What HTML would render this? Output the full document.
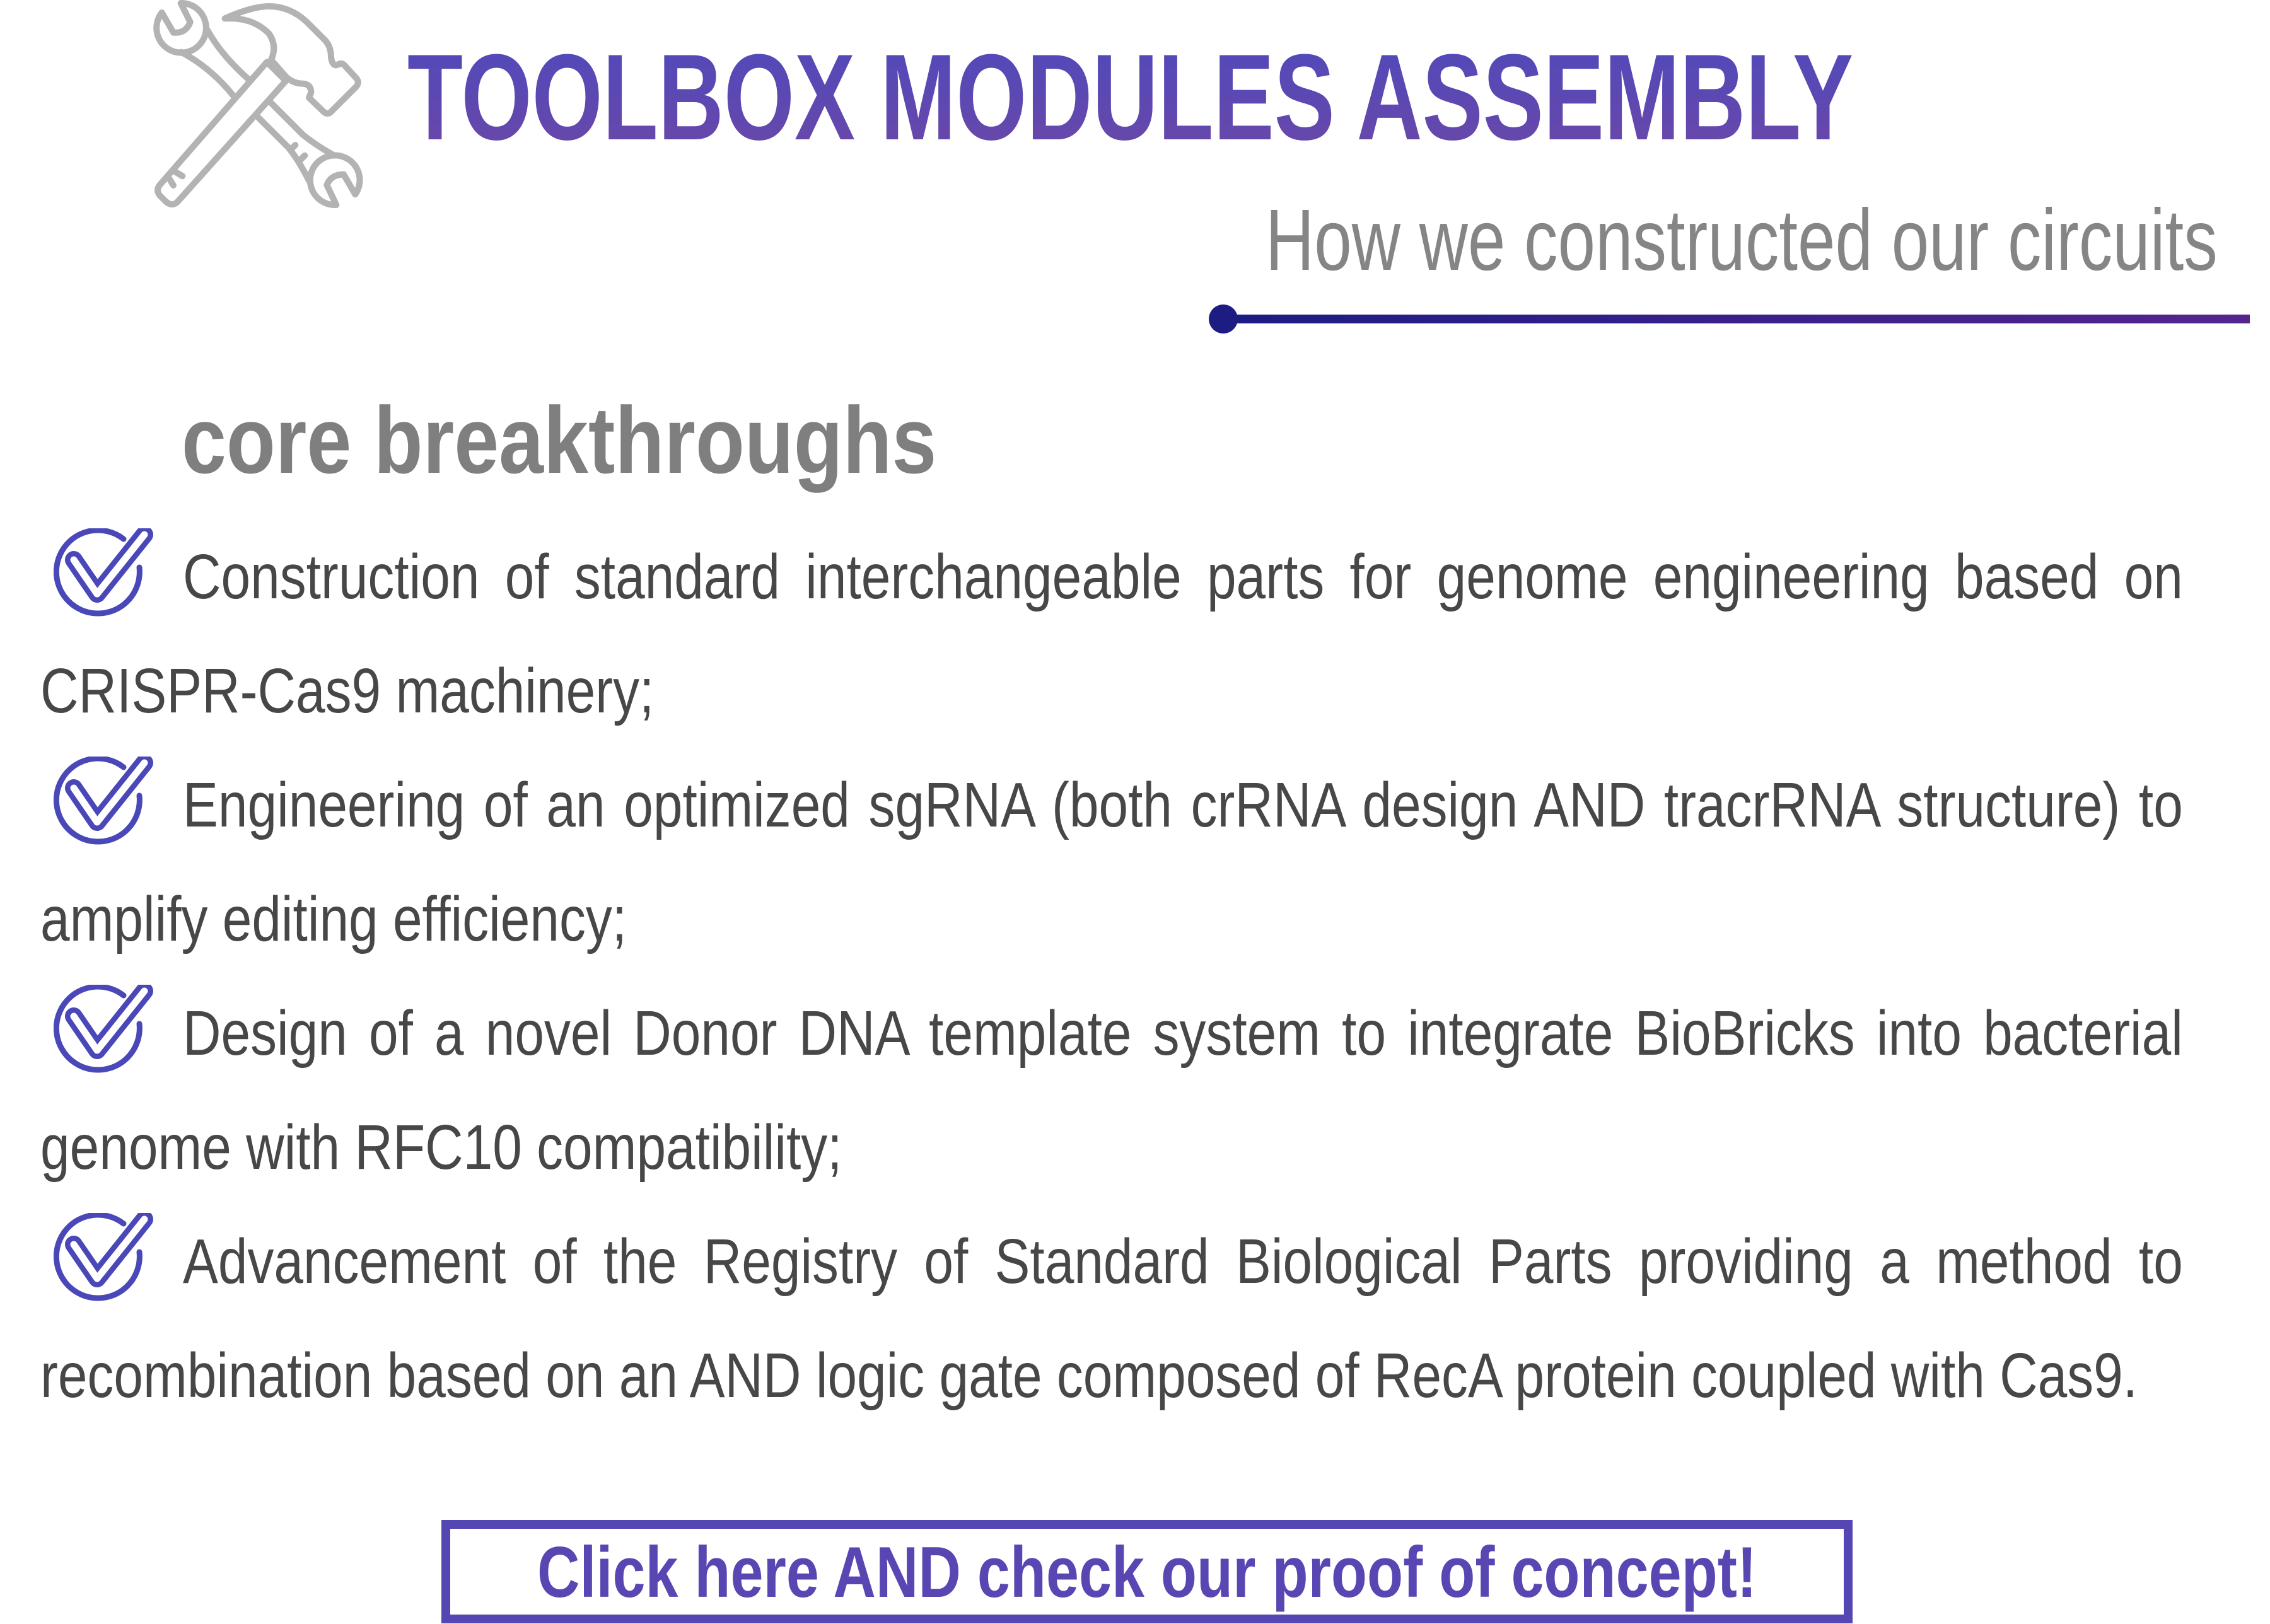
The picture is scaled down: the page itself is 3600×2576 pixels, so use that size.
<!DOCTYPE html>
<html><head><meta charset="utf-8"><style>
html,body{margin:0;padding:0;background:#fff;}
body{width:3600px;height:2576px;position:relative;overflow:hidden;font-family:"Liberation Sans",sans-serif;}
.a{position:absolute;white-space:nowrap;line-height:1;transform-origin:0 0;}
.b{font-size:100px;color:#474747;}
.j{text-align:justify;text-align-last:justify;}
</style></head><body>

<svg style="position:absolute;left:200px;top:0" width="420" height="360" viewBox="0 0 1260 1080" fill="none" stroke="#b3b3b3" stroke-width="30" stroke-linejoin="round" stroke-linecap="round">
<path d="M170,60 L225,155 Q285,160 305,105 L260,15 A118,118 0 1 1 170,60 Z"/>
<path d="M385,140 Q450,260 580,375"/>
<path d="M262,248 Q400,320 510,455"/>
<path d="M690,490 L840,640 Q900,690 990,740"/>
<path d="M630,560 L770,700 Q820,760 870,860"/>
<path d="M1090,925 L1035,830 Q975,830 955,880 L1000,975 A118,118 0 1 1 1090,925 Z"/>
<path d="M805,690 L785,710 M850,740 L830,760"/>
<path d="M670,295 L760,385 L245,960 Q220,985 190,960 L160,930 Q140,905 160,880 Z"/>
<path d="M230,815 L268,838 M205,850 L225,882"/>
<path d="M470,88 Q600,80 680,160 Q720,220 690,285 L765,370 Q800,398 840,398 Q880,400 880,440 L870,465 L940,532 Q958,548 975,532 L1095,412 Q1112,392 1095,372 L1040,312 Q1025,296 1010,306 Q982,322 975,272 Q975,220 945,190 L860,105 Q780,30 680,30 Q600,30 470,88 Z"/>
</svg>

<div class="a" style="left:646px;top:58px;font-size:194px;font-weight:bold;color:#5548b5;transform:scaleX(0.743);background:linear-gradient(180deg,#5049bb,#6a48a8);-webkit-background-clip:text;background-clip:text;-webkit-text-fill-color:transparent;">TOOLBOX MODULES ASSEMBLY</div>

<div class="a" style="left:2007px;top:312px;font-size:138px;color:#858585;transform:scaleX(0.775);">How we constructed our circuits</div>

<div style="position:absolute;left:1940px;top:499px;width:1628px;height:14px;background:linear-gradient(90deg,#1c1c82,#55248f);"></div>
<div style="position:absolute;left:1917px;top:483px;width:46px;height:46px;border-radius:50%;background:#1c1c82;"></div>

<div class="a" style="left:288px;top:623px;font-size:150px;font-weight:bold;color:#7f7f7f;transform:scaleX(0.85);">core breakthroughs</div>

<svg width="0" height="0" style="position:absolute"><defs>
<g id="ck">
<path d="M111,17 A66,66 0 1 0 136,62" fill="none" stroke="#4a48b8" stroke-width="9" stroke-linecap="round"/>
<path d="M32,50 L69,104 L144,10" fill="none" stroke="#4a48b8" stroke-width="28" stroke-linecap="round" stroke-linejoin="round"/>
<path d="M32,50 L69,104 L144,10" fill="none" stroke="#fff" stroke-width="11" stroke-linecap="round" stroke-linejoin="round"/>
</g></defs></svg>
<svg style="position:absolute;left:85px;top:838px" width="160" height="145" viewBox="0 0 160 145"><use href="#ck"/></svg>
<svg style="position:absolute;left:85px;top:1200px" width="160" height="145" viewBox="0 0 160 145"><use href="#ck"/></svg>
<svg style="position:absolute;left:85px;top:1562px" width="160" height="145" viewBox="0 0 160 145"><use href="#ck"/></svg>
<svg style="position:absolute;left:85px;top:1924px" width="160" height="145" viewBox="0 0 160 145"><use href="#ck"/></svg>

<div class="a b j" style="left:290px;top:865px;width:3785px;transform:scaleX(0.838);">Construction of standard interchangeable parts for genome engineering based on</div>
<div class="a b" style="left:64px;top:1046px;transform:scaleX(0.838);">CRISPR-Cas9 machinery;</div>
<div class="a b j" style="left:290px;top:1227px;width:3785px;transform:scaleX(0.838);">Engineering of an optimized sgRNA (both crRNA design AND tracrRNA structure) to</div>
<div class="a b" style="left:64px;top:1408px;transform:scaleX(0.838);">amplify editing efficiency;</div>
<div class="a b j" style="left:290px;top:1589px;width:3785px;transform:scaleX(0.838);">Design of a novel Donor DNA template system to integrate BioBricks into bacterial</div>
<div class="a b" style="left:64px;top:1770px;transform:scaleX(0.838);">genome with RFC10 compatibility;</div>
<div class="a b j" style="left:290px;top:1951px;width:3785px;transform:scaleX(0.838);">Advancement of the Registry of Standard Biological Parts providing a method to</div>
<div class="a b" style="left:64px;top:2132px;transform:scaleX(0.838);">recombination based on an AND logic gate composed of RecA protein coupled with Cas9.</div>

<div style="position:absolute;left:700px;top:2411px;width:2210px;height:136px;border:14px solid #5447b3;"></div>
<div class="a" style="left:0;width:3638px;text-align:center;top:2438px;font-size:114px;font-weight:bold;color:#5a46b2;transform-origin:1819px 0;transform:scaleX(0.82);">Click here AND check our proof of concept!</div>

</body></html>
